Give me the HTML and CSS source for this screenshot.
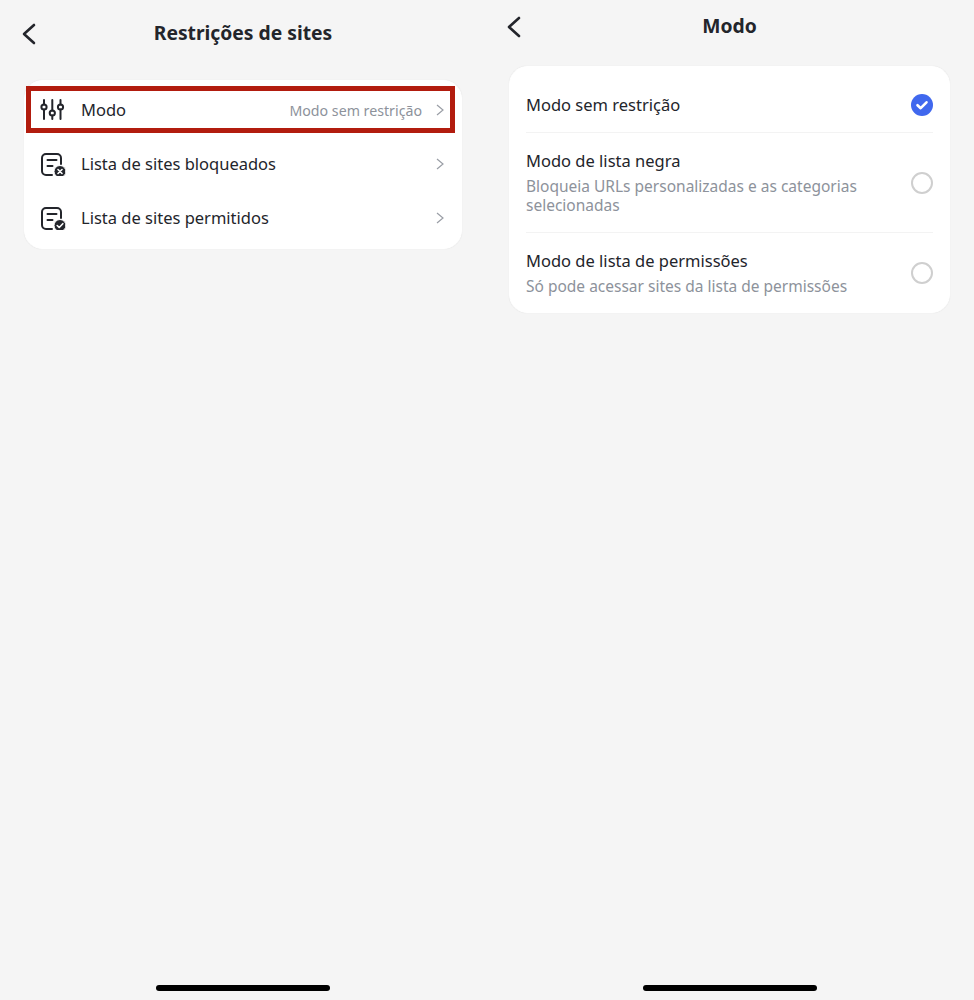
FILE: index.html
```html
<!DOCTYPE html>
<html lang="pt">
<head>
    <meta charset="UTF-8">
    <title>Restrições de sites</title>
    <link rel="stylesheet" href="styles.css">
</head>
<body>
<div class="screen screen-list">
    <div class="header">
        <svg class="back" viewBox="0 0 16 24"><path d="M13 3 L3 12 L13 21"/></svg>
        <h1>Restrições de sites</h1>
    </div>
    <div class="card list-card">
        <div class="row">
            <svg class="icon" viewBox="0 0 26 24">
                <path d="M4 2v4.400M4 11.600V21M12.300 2v10.400M12.300 17.600V21M20.500 2v4.400M20.500 11.600V21"/>
                <circle cx="4" cy="9" r="2.600"/>
                <circle cx="12.300" cy="15" r="2.600"/>
                <circle cx="20.500" cy="9" r="2.600"/>
            </svg>
            <span class="label">Modo</span>
            <span class="value">Modo sem restrição</span>
            <svg class="chevron" viewBox="0 0 8 12"><path d="M1 1 L7 6 L1 11"/></svg>
        </div>
        <div class="row">
            <svg class="icon" viewBox="0 0 26 24">
                <path d="M12 23H6a4 4 0 0 1-4-4V6a4 4 0 0 1 4-4h11a4 4 0 0 1 4 4v6"/>
                <path d="M7.500 8h9M7.500 14h5"/>
                <circle class="solid" cx="20" cy="19.500" r="6"/>
                <path class="mark" d="M18 17.500l4 4M22 17.500l-4 4"/>
            </svg>
            <span class="label">Lista de sites bloqueados</span>
            <svg class="chevron" viewBox="0 0 8 12"><path d="M1 1 L7 6 L1 11"/></svg>
        </div>
        <div class="row">
            <svg class="icon" viewBox="0 0 26 24">
                <path d="M12 23H6a4 4 0 0 1-4-4V6a4 4 0 0 1 4-4h11a4 4 0 0 1 4 4v6"/>
                <path d="M7.500 8h9M7.500 14h5"/>
                <circle class="solid" cx="20" cy="19.500" r="6"/>
                <path class="mark" d="M17.200 19.500l2 2 3.600-3.800"/>
            </svg>
            <span class="label">Lista de sites permitidos</span>
            <svg class="chevron" viewBox="0 0 8 12"><path d="M1 1 L7 6 L1 11"/></svg>
        </div>
        <div class="highlight"></div>
    </div>
    <div class="home-bar"></div>
</div>
<div class="screen screen-mode">
    <div class="header">
        <svg class="back" viewBox="0 0 16 24"><path d="M13 3 L3 12 L13 21"/></svg>
        <h1>Modo</h1>
    </div>
    <div class="card mode-card">
        <div class="option option-first">
            <div class="option-text">
                <div class="label">Modo sem restrição</div>
            </div>
            <svg class="radio" viewBox="0 0 22 22">
                <circle cx="11" cy="11" r="11" fill="#4068ee"/>
                <path d="M6.500 11.200l3.200 3L15.500 8.300" fill="none" stroke="#fff" stroke-width="2.600" stroke-linecap="round" stroke-linejoin="round"/>
            </svg>
        </div>
        <div class="option option-middle">
            <div class="option-text">
                <div class="label">Modo de lista negra</div>
                <div class="desc">Bloqueia URLs personalizadas e as categorias selecionadas</div>
            </div>
            <span class="radio radio-off"></span>
        </div>
        <div class="option option-last">
            <div class="option-text">
                <div class="label">Modo de lista de permissões</div>
                <div class="desc">Só pode acessar sites da lista de permissões</div>
            </div>
            <span class="radio radio-off"></span>
        </div>
    </div>
    <div class="home-bar"></div>
</div>
</body>
</html>
```

FILE: styles.css
```css
* {
    margin: 0;
    padding: 0;
    box-sizing: border-box;
}

body {
    display: flex;
    width: 974px;
    height: 1000px;
    overflow: hidden;
    background: #f5f5f5;
    color: #23252b;
    font-family: "Noto Sans", sans-serif;
}

.screen {
    display: flex;
    flex-direction: column;
    height: 1000px;
}

.screen-list {
    width: 486px;
    padding: 7px 24px 9px 24px;
}

.screen-mode {
    width: 488px;
    padding: 0 24px 9px 23px;
}

.header {
    position: relative;
    display: flex;
    align-items: center;
    justify-content: center;
    height: 52px;
}

.header h1 {
    margin-top: -1px;
    font-size: 19.300px;
    font-weight: 700;
}

.back {
    position: absolute;
    left: -3px;
    top: 15px;
    width: 16px;
    height: 24px;
    fill: none;
    stroke: #23252b;
    stroke-width: 2.600;
    stroke-linecap: round;
    stroke-linejoin: round;
}

.card {
    position: relative;
    background: #fff;
    border: 1px solid #fff;
    border-radius: 18px;
    box-shadow: 0 0 1px #dcdcdc;
}

.list-card {
    width: 438px;
    margin-top: 21px;
    padding: 2px 0 3px;
}

.mode-card {
    width: 441px;
    margin-top: 14px;
    padding: 11px 16px 0;
}

.row {
    display: flex;
    align-items: center;
    height: 54px;
    padding: 0 17px 0 15px;
}

.icon {
    flex: none;
    width: 26px;
    height: 24px;
    margin-right: 15px;
    fill: none;
    stroke: #23252b;
    stroke-width: 2;
    stroke-linecap: round;
    stroke-linejoin: round;
}

.icon .solid {
    fill: #23252b;
    stroke: #fff;
    stroke-width: 1;
}

.icon .mark {
    stroke: #fff;
    stroke-width: 1.600;
}

.label {
    font-size: 16.500px;
    font-weight: 450;
    line-height: 22px;
}

.value {
    margin-left: auto;
    color: #8d929b;
    font-size: 14.200px;
}

.chevron {
    flex: none;
    width: 8px;
    height: 12px;
    margin-left: 14px;
    fill: none;
    stroke: #9a9ea6;
    stroke-width: 1.200;
}

.row .label + .chevron {
    margin-left: auto;
}

.highlight {
    position: absolute;
    left: 1px;
    top: 5px;
    width: 429px;
    height: 47px;
    border: 5px solid #b21c0e;
}

.option {
    display: flex;
    align-items: center;
    justify-content: space-between;
    border-bottom: 1px solid #f3f3f3;
}

.option-first {
    height: 55px;
}

.option-middle {
    height: 100px;
}

.option-last {
    height: 79px;
    border-bottom: 0;
}

.option-text {
    width: 350px;
}

.desc {
    margin-top: 5px;
    color: #8d929b;
    font-size: 15.500px;
    line-height: 19px;
}

.radio {
    flex: none;
    width: 22px;
    height: 22px;
}

.radio-off {
    border: 2px solid #cfcfcf;
    border-radius: 50%;
}

.home-bar {
    width: 174px;
    height: 6px;
    margin: auto auto 0;
    background: #000;
    border-radius: 3px;
}
```
